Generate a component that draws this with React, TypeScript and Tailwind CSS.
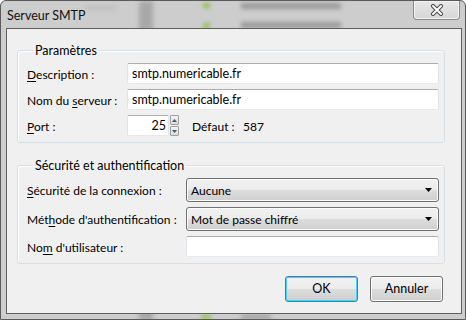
import React from "react";

const font = { fontFamily: 'Lato, "Noto Sans", sans-serif' };

function U({ children }: { children: React.ReactNode }) {
  return <span className="underline underline-offset-2">{children}</span>;
}

function TextBox({ value, className = "" }: { value?: string; className?: string }) {
  return (
    <div
      className={`h-[21px] bg-white border border-[#e2e3ea] border-t-[#abadb3] border-b-[#e3e9ef] rounded-[2px] flex items-center px-[4px] pt-[1px] text-[12.5px] text-black ${className}`}
    >
      {value}
    </div>
  );
}

function Combo({ value }: { value: string }) {
  return (
    <div className="flex-1 h-[24px] rounded-[3px] border border-[#707070] bg-[linear-gradient(#f2f2f2_0%,#ebebeb_50%,#dddddd_50%,#cfcfcf_100%)] shadow-[inset_0_0_0_1px_#fcfcfc] flex items-center justify-between pl-[4px] pr-[6px] text-black">
      <span className="pt-[1px]">{value}</span>
      <svg width="7" height="4" viewBox="0 0 7 4">
        <path d="M0 0 H7 L3.5 4 Z" fill="#000" />
      </svg>
    </div>
  );
}

function Button({ label, def }: { label: string; def?: boolean }) {
  return (
    <div
      className={`w-[73px] h-[26px] rounded-[3px] border flex items-center justify-center pt-[1px] text-black bg-[linear-gradient(#f2f2f2_0%,#ebebeb_50%,#dddddd_50%,#cfcfcf_100%)] ${
        def
          ? "border-[#3c7fb1] shadow-[inset_0_0_0_1px_#48d0f8]"
          : "border-[#707070] shadow-[inset_0_0_0_1px_#fcfcfc]"
      }`}
    >
      {label}
    </div>
  );
}

export default function App() {
  return (
    <div
      className="relative w-[466px] h-[320px] overflow-hidden bg-[#cdcdcd] border border-[#5a5a5a] rounded-t-[6px] flex flex-col text-[12px]"
      style={font}
    >
      {/* blurred background behind glass */}
      <div className="absolute inset-0 pointer-events-none blur-[2px]">
        <div className="absolute left-[138px] top-0 w-[14px] h-[320px] bg-[#a8a8a8]" />
        <div className="absolute left-[202px] top-[2px] w-[7px] h-[5px] bg-[#8fc04e]" />
        <div className="absolute left-[202px] top-[22px] w-[7px] h-[5px] bg-[#8fc04e]" />
        <div className="absolute left-[240px] top-[2px] w-[100px] h-[6px] bg-[#9a9a9a]" />
        <div className="absolute left-[240px] top-[21px] w-[100px] h-[6px] bg-[#9a9a9a]" />
        <div className="absolute left-[85px] top-[5px] w-[30px] h-[4px] bg-[#bdbdbd]" />
        <div className="absolute left-[200px] top-[314px] w-[10px] h-[4px] bg-[#8fc04e]" />
        <div className="absolute left-[240px] top-[314px] w-[30px] h-[4px] bg-[#9a9a9a]" />
      </div>

      {/* title bar */}
      <div className="relative h-[27px] flex items-start justify-between">
        <div className="pl-[6px] pt-[7px] text-[12.5px] leading-[16px] text-[#111]">Serveur SMTP</div>
        <div className="mr-[5px] w-[47px] h-[19px] rounded-b-[4px] border border-t-0 border-[#8a8a8a] bg-[linear-gradient(#e8e8e8,#d6d6d6)] shadow-[inset_0_0_0_1px_#f4f4f4] flex items-center justify-center">
          <svg width="14" height="12" viewBox="0 0 14 12">
            <path d="M3 2 L11 10 M11 2 L3 10" stroke="#4a4a4a" strokeWidth="4" strokeLinecap="round" />
            <path d="M3 2 L11 10 M11 2 L3 10" stroke="#ffffff" strokeWidth="2" strokeLinecap="round" />
          </svg>
        </div>
      </div>

      {/* client area */}
      <div className="relative ml-[5px] mr-[3px] h-[286px] border border-[#5f5f5f] bg-[#f0f0f0] flex flex-col text-black whitespace-nowrap">
        <fieldset className="ml-[10px] mr-[16px] mt-[12px] border border-[#d5dfe5] rounded-[3px] pl-[9px] pr-[5px] pt-[4px] pb-[6px] shadow-[inset_1px_1px_0_#fff]">
          <legend className="ml-[6px] px-[2px] leading-[16px] pt-[2px] text-[12.5px]">Paramètres</legend>
          <div className="flex flex-col gap-[5px]">
            <div className="flex items-center">
              <div className="w-[100px] pt-[2px]">
                <U>D</U>escription :
              </div>
              <TextBox value="smtp.numericable.fr" className="flex-1" />
            </div>
            <div className="flex items-center">
              <div className="w-[100px] pt-[2px]">
                Nom du <U>s</U>erveur :
              </div>
              <TextBox value="smtp.numericable.fr" className="flex-1" />
            </div>
            <div className="flex items-center">
              <div className="w-[100px] pt-[2px]">
                <U>P</U>ort :
              </div>
              <TextBox value="25" className="w-[42px] justify-end !px-[2px]" />
              <div className="w-[9px] h-[21px] flex flex-col gap-[1px] ml-[1px]">
                <div className="flex-1 border border-[#a0a0a0] rounded-[1px] bg-[linear-gradient(#f4f4f4,#dcdcdc)] flex items-center justify-center">
                  <svg width="5" height="3" viewBox="0 0 5 3">
                    <path d="M0 3 L2.5 0 L5 3 Z" fill="#3c5a80" />
                  </svg>
                </div>
                <div className="flex-1 border border-[#a0a0a0] rounded-[1px] bg-[linear-gradient(#f4f4f4,#dcdcdc)] flex items-center justify-center">
                  <svg width="5" height="3" viewBox="0 0 5 3">
                    <path d="M0 0 L5 0 L2.5 3 Z" fill="#3c5a80" />
                  </svg>
                </div>
              </div>
              <div className="ml-[13px] w-[51px] pt-[2px]">Défaut :</div>
              <div className="pt-[2px]">587</div>
            </div>
          </div>
        </fieldset>

        <fieldset className="ml-[10px] mr-[16px] mt-[13px] border border-[#d5dfe5] rounded-[3px] pl-[9px] pr-[5px] pt-[4px] pb-[6px] shadow-[inset_1px_1px_0_#fff]">
          <legend className="ml-[6px] px-[2px] leading-[16px] pt-[2px] text-[12.5px]">Sécurité et authentification</legend>
          <div className="flex flex-col gap-[5px]">
            <div className="flex items-center">
              <div className="w-[159px] pt-[2px]">
                <U>S</U>écurité de la connexion :
              </div>
              <Combo value="Aucune" />
            </div>
            <div className="flex items-center">
              <div className="w-[159px] pt-[2px]">
                Mét<U>h</U>ode d'authentification :
              </div>
              <Combo value="Mot de passe chiffré" />
            </div>
            <div className="flex items-center">
              <div className="w-[159px] pt-[2px]">
                No<U>m</U> d'utilisateur :
              </div>
              <TextBox className="flex-1" />
            </div>
          </div>
        </fieldset>

        <div className="mt-[12px] mr-[18px] flex justify-end gap-[12px] text-[12.5px]">
          <Button label="OK" def />
          <Button label="Annuler" />
        </div>
      </div>
    </div>
  );
}
